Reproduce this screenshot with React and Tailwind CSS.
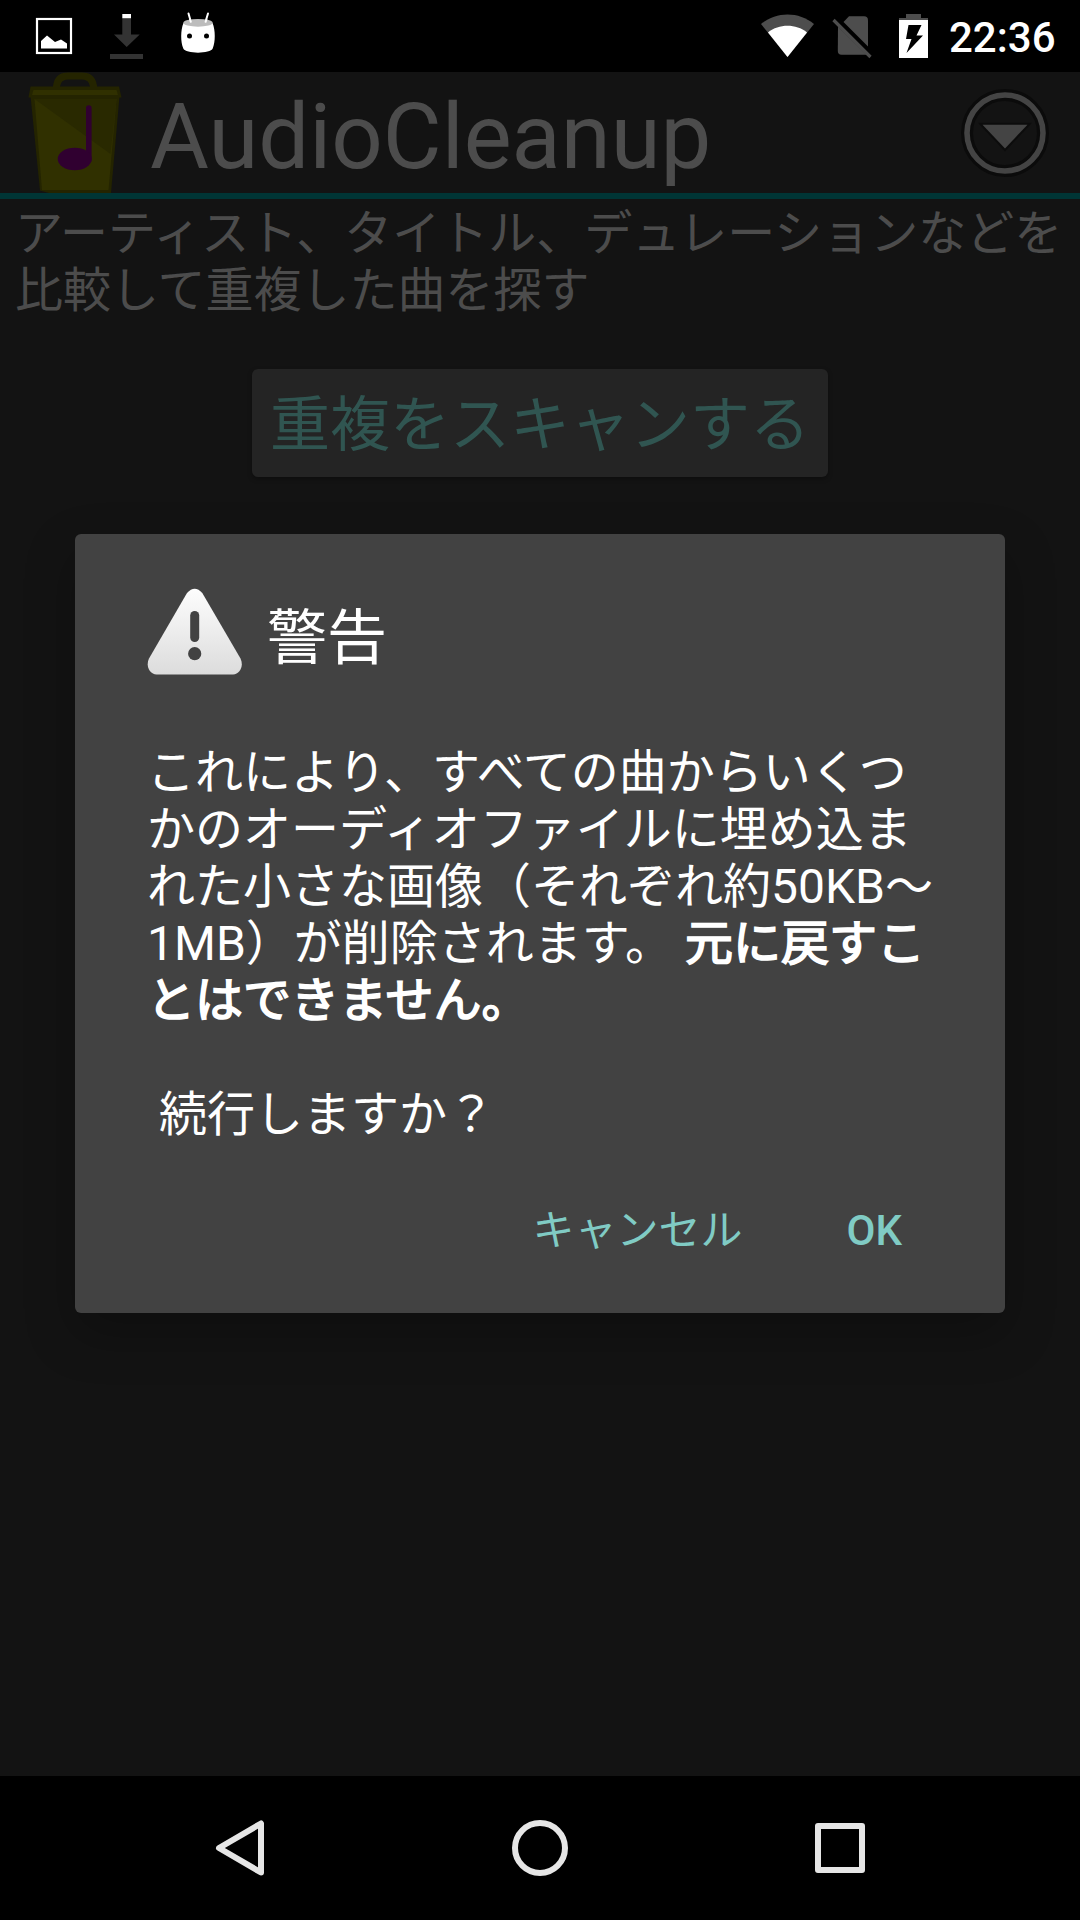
import React, { useState } from 'react';

const StatusBar = () => (
  <div className="h-[72px] bg-black flex items-center justify-between">
    <svg width="240" height="72" viewBox="0 0 240 72">
      {/* Picture */}
      <rect x="37" y="19" width="34" height="34" fill="none" stroke="#fff" strokeWidth="2.2" />
      <path d="M41 41L47 35.5L55 42L61 39.5L67 43.5V48.5H41Z" fill="#fff" />
      {/* Download */}
      <path d="M122.3 18H131V34.5H139.7L126.7 47L114 34.5H122.3Z" fill="#333" />
      <rect x="122.3" y="14" width="8.7" height="4.2" fill="#fff" />
      <rect x="110" y="54" width="33" height="5" fill="#333" />
      {/* Marshmallow */}
      <path d="M188.5 13.5L190.8 21.5M208 13.5L205.6 21.5" stroke="#fff" strokeWidth="2" strokeLinecap="round" />
      <path d="M183.5 23C180.5 30 180.5 42 183.3 48.5C185.5 54 210.5 54 212.7 48.5C215.5 42 215.5 30 212.5 23Z" fill="#fff" />
      <ellipse cx="198" cy="22.8" rx="14.7" ry="3.9" fill="#bcbcbc" />
      <path d="M190 19.5L190.8 21.8M206.4 19.5L205.6 21.8" stroke="#fff" strokeWidth="2" strokeLinecap="round" />
      <circle cx="189.5" cy="36" r="2.5" fill="#000" />
      <circle cx="206.5" cy="36" r="2.5" fill="#000" />
    </svg>
    <div className="flex items-center">
      <svg width="200" height="72" viewBox="749 0 200 72">
        {/* Wifi */}
        <path d="M761 24C776 11.2 799 11.2 814 24L787.5 57Z" fill="#4d4d4d" />
        <path d="M768 32.5C779 23.6 796 23.6 807 32.5L787.5 57Z" fill="#fff" />
        {/* No sim */}
        <path d="M843.5 22L849 16.3H864Q868 16.3 868 20.3V46.5Z" fill="#4d4d4d" />
        <path d="M838 26.500L866.5 54.7H841.5Q837.8 54.7 837.8 51Z" fill="#4d4d4d" />
        <path d="M833.5 20L870.5 57" stroke="#4d4d4d" strokeWidth="3.2" />
        {/* Battery */}
        <path d="M899 20V18H906V14H921V18H928V20Z" fill="#4d4d4d" />
        <rect x="899" y="20" width="29" height="38" fill="#fff" />
        <path d="M908.5 25H921.5L916.5 35.5H923L906.5 53L911.5 39H906Z" fill="#000" />
      </svg>
      <span className="w-[131px] pt-1 text-[42px] leading-[72px] font-medium text-white">22:36</span>
    </div>
  </div>
);

const TrashIcon = () => (
  <svg width="150" height="121" viewBox="0 72 150 121">
    <path d="M56.5 90V86Q58 76 68 76H82Q92 76 93.5 86V90" fill="none" stroke="#242400" strokeWidth="7" />
    <path d="M30.5 96H119.5L111 193H49L40 190.5Z" fill="#242400" />
    <path d="M34.5 99H116.5L108.5 190H42Z" fill="#303000" />
    <path d="M34.5 99H116.5L110.5 154Z" fill="#292900" />
    <path d="M30.5 86.5H119L121.5 97.5H28.5Z" fill="#242400" />
    <path d="M33.5 90H116.5L118 95H32Z" fill="#303000" />
    <path d="M88.8 108V160" stroke="#300030" strokeWidth="5.6" strokeLinecap="round" />
    <ellipse cx="74.7" cy="159" rx="17" ry="11.3" fill="#300030" />
  </svg>
);

const Header = () => (
  <div className="h-[127px] border-b-6 border-[#003535] flex items-center pr-[31px]">
    <TrashIcon />
    <h1 className="flex-1 pt-2.5 text-[90.4px] leading-none text-[#4c4c4c]">AudioCleanup</h1>
    <svg width="88" height="88" viewBox="0 0 88 88">
      <circle cx="44" cy="44" r="38" fill="none" stroke="#0b0b0b" strokeWidth="12" />
      <circle cx="44" cy="44" r="38" fill="none" stroke="#444" strokeWidth="5.6" />
      <path d="M21.5 35.7H66.5L44 59.5Z" fill="#444" stroke="#0c0c0c" strokeWidth="4" paintOrder="stroke" />
    </svg>
  </div>
);

const WarningIcon = () => (
  <svg width="96" height="96" viewBox="0 0 96 96">
    <defs>
      <linearGradient id="warn" x1="0" y1="0" x2="0" y2="1">
        <stop offset="0" stopColor="#fdfdfd" />
        <stop offset="1" stopColor="#dcdcdc" />
      </linearGradient>
    </defs>
    <path
      d="M40 5Q47.7 -3.5 55.3 5L93.5 70.5C97 78 93 86 86 86.5H9.5C2.5 86 -1.5 78 2 70.5Z"
      fill="url(#warn)"
    />
    <path d="M47.7 27.5V49.5" stroke="#424242" strokeWidth="9" strokeLinecap="round" />
    <circle cx="47.7" cy="65.7" r="6.6" fill="#424242" />
  </svg>
);

const WarningDialog = ({ onClose }) => (
  <div className="absolute left-[75px] top-[534px] w-[930px] h-[779px] rounded-md bg-[#424242] text-white shadow-[0_20px_50px_rgba(0,0,0,0.25)] flex flex-col px-[72px] pt-[54px]">
    <div className="flex items-start gap-[24px]">
      <WarningIcon />
      <h2 className="pt-[3px] text-[60px] leading-[96px]">警告</h2>
    </div>
    <p className="mt-[57px] text-[48px] leading-[57px] whitespace-nowrap">
      これにより、すべての曲からいくつ<br />
      かのオーディオファイルに埋め込ま<br />
      れた小さな画像（それぞれ約50KB～<br />
      1MB）が削除されます。{' '}
      <b className="font-normal [-webkit-text-stroke:1.7px_white]">元に戻すこ<br />
      とはできません。</b><br />
      <br />
      &nbsp;続行しますか？
    </p>
    <div className="mt-[52px] flex justify-end text-[42px] leading-[72px] text-[#80cbc4] font-medium">
      <button className="mr-[104px] font-normal" onClick={onClose}>キャンセル</button>
      <button className="mr-[31px]" onClick={onClose}>OK</button>
    </div>
  </div>
);

const NavBar = () => (
  <div className="h-[144px] bg-black flex items-center justify-center gap-[240px]">
    <svg width="60" height="60" viewBox="0 0 60 60" fill="none" stroke="#e6e6e6" strokeWidth="6" strokeLinejoin="round">
      <path d="M51 5.5V54.5L9 30Z" />
    </svg>
    <svg width="60" height="60" viewBox="0 0 60 60" fill="none" stroke="#e6e6e6" strokeWidth="6">
      <circle cx="30" cy="30" r="25" />
    </svg>
    <svg width="60" height="60" viewBox="0 0 60 60" fill="none" stroke="#e6e6e6" strokeWidth="6" strokeLinejoin="round">
      <rect x="8" y="8" width="44" height="44" />
    </svg>
  </div>
);

const App = () => {
  const [open, setOpen] = useState(true);

  return (
    <div
      lang="ja"
      className="relative w-[1080px] h-[1920px] overflow-hidden bg-[#131313] flex flex-col font-['Roboto','Noto_Sans_CJK_JP',sans-serif]"
    >
      <StatusBar />
      <Header />
      <main className="flex-1 flex flex-col items-center">
        <p className="w-full pl-[15px] pt-1.5 text-[48px] leading-[57px] text-[#4c4c4c] whitespace-nowrap">
          アーティスト、タイトル、デュレーションなどを<br />
          比較して重複した曲を探す
        </p>
        <button
          className="mt-[50px] w-[576px] h-[108px] pt-[5px] rounded-md bg-[#242424] text-[60px] leading-[103px] text-[#305551] shadow-[0_2px_5px_rgba(0,0,0,0.3)]"
          onClick={() => setOpen(true)}
        >
          重複をスキャンする
        </button>
      </main>
      <NavBar />
      {open && <WarningDialog onClose={() => setOpen(false)} />}
    </div>
  );
};

export default App;
